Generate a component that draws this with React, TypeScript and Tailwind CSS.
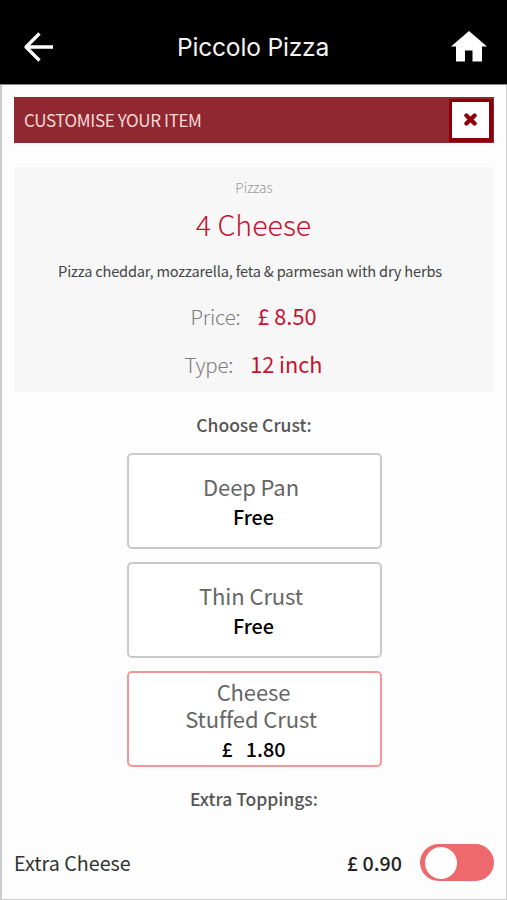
type CrustProps = { lines: string[]; price: string; selected?: boolean };

function Crust({ lines, price, selected = false }: CrustProps) {
  return (
    <button
      className={`flex h-24 w-[255px] flex-col items-center justify-center rounded-[5px] border-2 bg-white pt-px text-center ${
        selected ? "border-[#f79598]" : "border-[#cacaca]"
      }`}
    >
      {lines.map((line, i) => (
        <span
          key={line}
          className={`block h-[27px] text-[22px] leading-[27px] tracking-[-0.1px] text-[#666] ${
            i === lines.length - 1 ? "pr-[6px]" : "pr-px"
          }`}
        >
          {line}
        </span>
      ))}
      <span className="flex h-[30px] gap-[13px] pt-[2px] pr-px text-[19.8px] leading-[30px] font-medium text-black">
        {price.split(" ").map((part) => (
          <span key={part}>{part}</span>
        ))}
      </span>
    </button>
  );
}

function Detail({ label, value }: { label: string; value: string }) {
  return (
    <div className="flex h-12 items-center justify-center gap-[17px] pr-px">
      <span className="text-[20.5px] font-light tracking-[-0.2px] text-[#7c7c7c]">{label}</span>
      <span className="text-[21.7px] text-[#c4122f]">{value}</span>
    </div>
  );
}

export default function App() {
  return (
    <div className="flex h-[900px] w-[507px] flex-col overflow-hidden bg-[#fdfdfd] font-['Noto_Sans_CJK_SC','Noto_Sans',sans-serif]">
      <header className="flex h-[85px] shrink-0 items-center justify-between border-b border-[#888] bg-black pt-[9px] pr-[20px] pl-[23px] text-white">
        <svg width="31" height="30" viewBox="0 0 31 30" fill="none" stroke="currentColor" strokeWidth="3.3">
          <path d="M16.5 1.5 3 15l13.5 13.5M3 15h27" strokeLinejoin="round" />
        </svg>
        <h1 className="pl-px font-['Inter',sans-serif] text-[24.6px] leading-[30px] font-normal tracking-[-0.2px] text-[#f4f4f4]">
          Piccolo Pizza
        </h1>
        <svg width="36" height="31" viewBox="0 0 36 31" fill="currentColor">
          <path d="M18 0 36 15.500h-5v15H21.500V19.500h-7.500v11H5v-15H0Z" />
        </svg>
      </header>

      <main className="flex grow flex-col border-r border-b border-l-2 border-[#ccc] px-3 pt-3">
        <div className="flex h-[46px] w-[480px] shrink-0 items-center justify-between bg-[#902832] pl-[10px]">
          <h2 className="text-[17px] leading-6 tracking-[-0.38px] text-[#fbd9d5]">CUSTOMISE YOUR ITEM</h2>
          <button className="mr-px flex h-[43px] w-[44px] items-center justify-center border-[3px] border-r-4 border-b-4 border-[#8b0008] bg-white">
            <svg width="13" height="13" viewBox="0 0 13 13" fill="none" stroke="#8b0008" strokeWidth="4.2">
              <path d="m2.400 2.400 8.200 8.200M10.600 2.400l-8.200 8.200" strokeLinecap="round" />
            </svg>
          </button>
        </div>

        <section className="mt-6 flex h-[225px] w-[480px] shrink-0 flex-col bg-[#f7f7f7] text-center">
          <p className="mt-2 h-6 text-[13.6px] leading-6 font-light text-[#999]">Pizzas</p>
          <h3 className="mt-1 h-[42px] pr-px text-[28.6px] leading-[42px] font-light text-[#c4122f]">4 Cheese</h3>
          <p className="mt-[14px] h-6 pr-2 text-[14.6px] leading-6 tracking-[-0.18px] text-[#444]">
            Pizza cheddar, mozzarella, feta &amp; parmesan with dry herbs
          </p>
          <div className="mt-[9px]">
            <Detail label="Price:" value="£ 8.50" />
            <Detail label="Type:" value="12 inch" />
          </div>
        </section>

        <section className="flex flex-col items-center">
          <h4 className="mt-[17px] h-8 text-[17.5px] leading-8 font-medium text-[#555]">Choose Crust:</h4>
          <div className="mt-3 flex flex-col gap-[13px]">
            <Crust lines={["Deep Pan"]} price="Free" />
            <Crust lines={["Thin Crust"]} price="Free" />
            <Crust lines={["Cheese", "Stuffed Crust"]} price="£ 1.80" selected />
          </div>
          <h4 className="mt-4 h-8 text-[17.5px] leading-8 font-medium text-[#555]">Extra Toppings:</h4>
        </section>

        <div className="mt-[29px] flex h-[37px] w-[480px] items-center">
          <span className="grow text-[19.7px] leading-[37px] text-[#333]">Extra Cheese</span>
          <span className="text-[19.7px] leading-[37px] font-medium text-[#222]">£ 0.90</span>
          <span className="ml-[18px] flex h-[37px] w-[74px] items-center rounded-full bg-[#ee696c] pl-[5px]">
            <span className="size-8 rounded-full bg-white" />
          </span>
        </div>
      </main>
    </div>
  );
}
